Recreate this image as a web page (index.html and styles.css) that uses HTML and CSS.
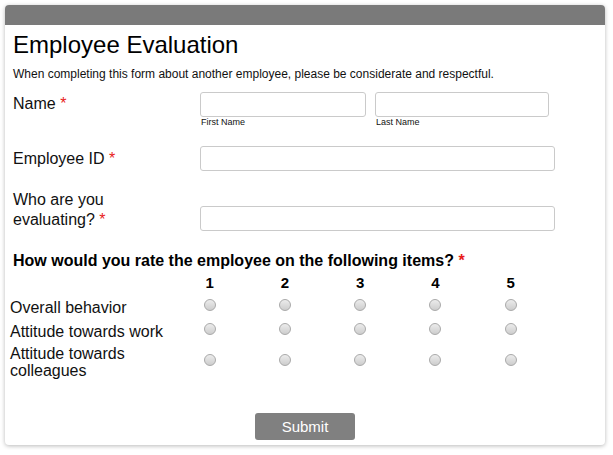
FILE: index.html
```html
<!DOCTYPE html>
<html lang="en">
<head>
    <meta charset="UTF-8">
    <meta name="viewport" content="width=device-width, initial-scale=1.0">
    <title>Employee Evaluation</title>
    <link rel="stylesheet" href="styles.css">
</head>
<body>
    <form class="card">
        <div class="card-top"></div>
        <div class="card-body">
            <h1>Employee Evaluation</h1>
            <p class="intro">When completing this form about another employee, please be considerate and respectful.</p>

            <div class="field">
                <label class="field-label name-label">Name <span class="req">*</span></label>
                <div class="name-inputs">
                    <div class="name-part first">
                        <input type="text">
                        <span class="sublabel">First Name</span>
                    </div>
                    <div class="name-part last">
                        <input type="text">
                        <span class="sublabel">Last Name</span>
                    </div>
                </div>
            </div>

            <div class="field field-id">
                <label class="field-label">Employee ID <span class="req">*</span></label>
                <input type="text" class="wide">
            </div>

            <div class="field field-who">
                <label class="field-label">Who are you<br>evaluating? <span class="req">*</span></label>
                <input type="text" class="wide">
            </div>

            <h2 class="question">How would you rate the employee on the following items? <span class="req">*</span></h2>

            <div class="matrix">
                <div class="matrix-head">
                    <span></span>
                    <span>1</span><span>2</span><span>3</span><span>4</span><span>5</span>
                </div>
                <div class="matrix-row">
                    <span class="row-label">Overall behavior</span>
                    <span><input type="radio" name="r1"></span>
                    <span><input type="radio" name="r1"></span>
                    <span><input type="radio" name="r1"></span>
                    <span><input type="radio" name="r1"></span>
                    <span><input type="radio" name="r1"></span>
                </div>
                <div class="matrix-row">
                    <span class="row-label">Attitude towards work</span>
                    <span><input type="radio" name="r2"></span>
                    <span><input type="radio" name="r2"></span>
                    <span><input type="radio" name="r2"></span>
                    <span><input type="radio" name="r2"></span>
                    <span><input type="radio" name="r2"></span>
                </div>
                <div class="matrix-row">
                    <span class="row-label">Attitude towards<br>colleagues</span>
                    <span><input type="radio" name="r3"></span>
                    <span><input type="radio" name="r3"></span>
                    <span><input type="radio" name="r3"></span>
                    <span><input type="radio" name="r3"></span>
                    <span><input type="radio" name="r3"></span>
                </div>
            </div>

            <div class="actions">
                <button type="button" class="submit">Submit</button>
            </div>
        </div>
    </form>
</body>
</html>
```

FILE: styles.css
```css
body {
    margin: 0;
    padding: 5px;
    background-color: #fff;
    font-family: "Liberation Sans", Arial, sans-serif;
    color: #111;
}
.card {
    width: 600px;
    border-radius: 4px;
    overflow: hidden;
    background: #fff;
    box-shadow: 0 1px 4px rgba(0,0,0,0.28);
}
.card-top {
    height: 20px;
    background-color: #7a7a7a;
}
.card-body {
    padding: 0 0 5px 8px;
}
h1 {
    margin: 6px 0 0;
    font-size: 24px;
    line-height: 28px;
    font-weight: normal;
    color: #000;
}
.intro {
    margin: 8px 0 0;
    font-size: 12px;
    line-height: 14px;
}
.req {
    color: #e81b1b;
}
.field {
    display: grid;
    grid-template-columns: 187px auto;
    align-items: start;
}
.field-label {
    font-size: 16px;
    line-height: 18px;
}
.field:first-of-type {
    margin-top: 11px;
}
.name-label {
    padding-top: 3px;
}
.name-inputs {
    display: flex;
    gap: 9px;
}
.name-part {
    display: flex;
    flex-direction: column;
}
.name-part.first input { width: 166px; }
.name-part.last input { width: 174px; }
.sublabel {
    font-size: 9px;
    line-height: 11px;
    padding-left: 1px;
}
input[type="text"] {
    box-sizing: border-box;
    height: 25px;
    margin: 0;
    border: 1px solid #cacaca;
    border-radius: 3px;
    background: #fff;
}
input.wide {
    width: 355px;
}
.field-id {
    margin-top: 18px;
}
.field-id .field-label {
    padding-top: 4px;
}
.field-who {
    margin-top: 19px;
}
.field-who .field-label {
    line-height: 20px;
}
.field-who input {
    margin-top: 16px;
}
.question {
    margin: 21px 0 0;
    font-size: 16px;
    line-height: 18px;
    font-weight: bold;
    color: #000;
}
.matrix {
    margin-left: -3px;
}
.matrix-head,
.matrix-row {
    display: grid;
    grid-template-columns: 162px repeat(5, 75.25px);
    align-items: center;
}
.matrix-head {
    margin-top: 4px;
    padding-bottom: 2px;
    font-size: 15px;
    line-height: 17px;
    font-weight: bold;
    color: #000;
    text-align: center;
}
.matrix-row {
    min-height: 24px;
}
.matrix-row span {
    display: flex;
    justify-content: center;
}
.matrix-row .row-label {
    display: block;
    padding-top: 4px;
    font-size: 16px;
    line-height: 17px;
}
input[type="radio"] {
    appearance: none;
    -webkit-appearance: none;
    width: 12px;
    height: 12px;
    margin: 0;
    border: 1px solid #a9a9a9;
    border-radius: 50%;
    background: linear-gradient(#ececec, #cdcdcd);
}
.actions {
    display: flex;
    justify-content: center;
    margin-top: 34px;
    padding-right: 8px;
}
.submit {
    width: 100px;
    height: 27px;
    border: none;
    border-radius: 3px;
    background-color: #808080;
    color: #fff;
    font-family: "Liberation Sans", Arial, sans-serif;
    font-size: 15px;
    cursor: pointer;
}
```
